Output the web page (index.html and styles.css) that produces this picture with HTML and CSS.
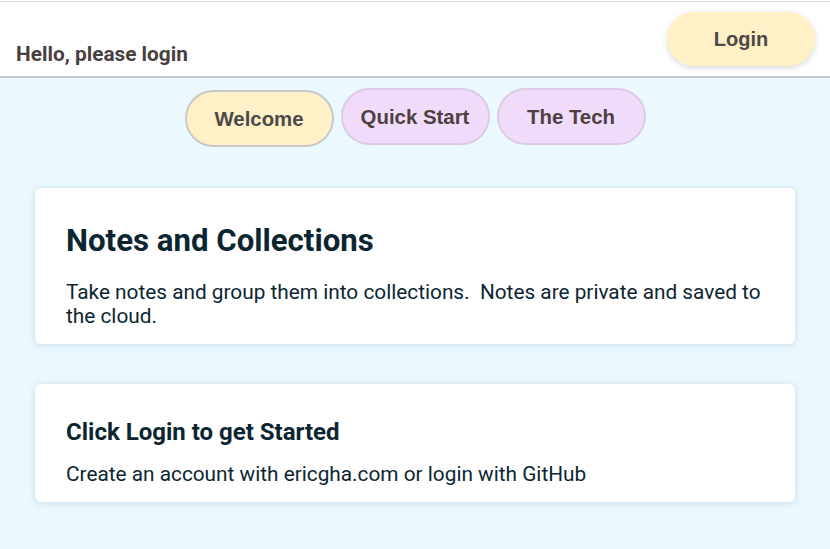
FILE: index.html
```html
<!DOCTYPE html>
<html lang="en">
<head>
<meta charset="utf-8">
<title>Notes</title>
<link rel="stylesheet" href="styles.css">
</head>
<body>
<header class="topbar">
  <div class="greeting">Hello, please login</div>
  <button class="login-btn">Login</button>
</header>
<nav class="tabs">
  <button class="tab tab-active">Welcome</button>
  <button class="tab">Quick Start</button>
  <button class="tab">The Tech</button>
</nav>
<main class="content">
  <section class="card">
    <h1 class="card-title">Notes and Collections</h1>
    <p class="card-text">Take notes and group them into collections.&nbsp; Notes are private and saved to the cloud.</p>
  </section>
  <section class="card">
    <h2 class="card-subtitle">Click Login to get Started</h2>
    <p class="card-text">Create an account with ericgha.com or login with GitHub</p>
  </section>
</main>
</body>
</html>
```
FILE: styles.css
```css
html, body {
  margin: 0;
  padding: 0;
}
body {
  background: #ebf8fe;
  font-family: Roboto, "Liberation Sans", sans-serif;
  min-height: 549px;
}
.topbar {
  box-sizing: border-box;
  height: 78px;
  background: #ffffff;
  box-shadow: inset 0 1px 0 #ffffff, inset 0 2px 0 #dddddd;
  border-bottom: 2px solid #c8c8c8;
  display: flex;
  justify-content: space-between;
  align-items: center;
  padding: 0 15px 0 16px;
}
.greeting {
  align-self: flex-end;
  padding-bottom: 10px;
  font-size: 20.8px;
  font-weight: 700;
  color: #4a3f3f;
}
.login-btn {
  width: 148px;
  height: 54px;
  margin-top: 2px;
  border: none;
  border-radius: 27px;
  background: #fff0c8;
  box-shadow: 0 2px 6px rgba(0, 0, 0, 0.15);
  font-family: "Liberation Sans", Arial, sans-serif;
  font-size: 20px;
  font-weight: 700;
  color: #4d4747;
}
.tabs {
  display: flex;
  justify-content: center;
  align-items: flex-start;
  gap: 7px;
  padding-top: 10px;
}
.tab {
  width: 149px;
  height: 57px;
  border: 2px solid #dccbe4;
  border-radius: 29px;
  background: #f0dcfa;
  font-family: "Liberation Sans", Arial, sans-serif;
  font-size: 20.4px;
  font-weight: 700;
  color: #4d4040;
  padding-top: 2px;
}
.tab-active {
  margin-top: 2px;
  background: #fff0c8;
  border-color: #c8c8c8;
  color: #4d4a4a;
}
.content {
  padding: 41px 35px 0;
  display: flex;
  flex-direction: column;
  gap: 40px;
}
.card {
  background: #ffffff;
  border-radius: 6px;
  box-shadow: 0 1px 6px rgba(120, 170, 190, 0.35);
  padding: 34px 31px 16px;
  color: #0c2631;
}
.card-title {
  margin: 0 0 21px;
  font-size: 31.2px;
  font-weight: 700;
}
.card-subtitle {
  margin: 0 0 16px;
  font-size: 24px;
  font-weight: 700;
}
.card-text {
  margin: 0;
  font-size: 20.8px;
}
```
